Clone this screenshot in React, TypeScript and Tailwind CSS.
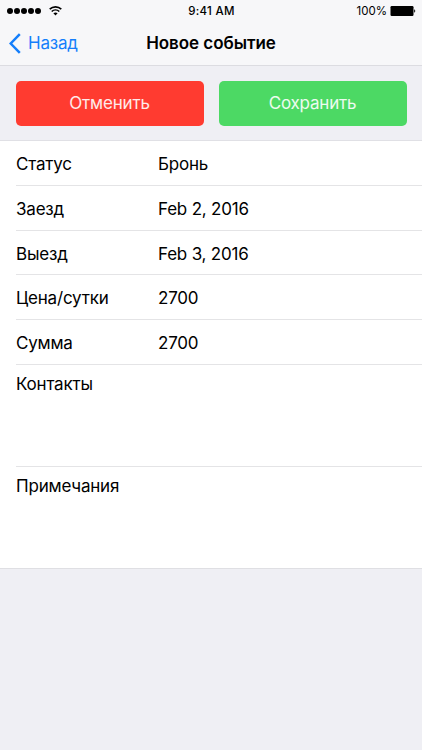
import clsx from "clsx";

const fields = [
  { label: "Статус", value: "Бронь", height: "h-[45px]" },
  { label: "Заезд", value: "Feb 2, 2016", height: "h-[45px]" },
  { label: "Выезд", value: "Feb 3, 2016", height: "h-[44px]" },
  { label: "Цена/сутки", value: "2700", height: "h-[45px]" },
  { label: "Сумма", value: "2700", height: "h-[45px]" },
];

function StatusBar() {
  return (
    <div className="grid h-[22px] grid-cols-3 items-center pl-[7px] pr-[6px] text-[11.5px] leading-none">
      <div className="flex items-center">
        <div className="flex gap-[1px]">
          {[0, 1, 2, 3, 4].map((dot) => (
            <span key={dot} className="h-[6px] w-[6px] rounded-full bg-black" />
          ))}
        </div>
        <svg className="mb-px ml-2 h-[10px] w-[13px]" viewBox="0 0 13 10" fill="none" stroke="black">
          <path d="M0.7 3.2C4 0.1 9 0.1 12.3 3.2" strokeWidth="1.6" />
          <path d="M2.7 5.5C4.9 3.5 8.1 3.5 10.3 5.5" strokeWidth="1.6" />
          <path d="M6.5 9.5L4.4 7.3C5.7 6.2 7.3 6.2 8.6 7.3Z" fill="black" stroke="none" />
        </svg>
      </div>
      <div className="pt-[2px] text-center font-medium tracking-[0.3px]">9:41 AM</div>
      <div className="flex items-center justify-end gap-[3px]">
        <span className="pt-[2px]">100%</span>
        <svg className="mb-px h-[10px] w-[26px]" viewBox="0 0 26 10">
          <rect x="0.5" y="0" width="23" height="10" rx="1.2" fill="black" />
          <path d="M24.2 3.3C25.6 3.7 25.6 6.3 24.2 6.7Z" fill="black" />
        </svg>
      </div>
    </div>
  );
}

function NavBar() {
  return (
    <div className="grid h-[43px] grid-cols-[1fr_auto_1fr] items-center px-[9px]">
      <div className="flex items-center gap-[7px] text-[17px] tracking-[-0.2px] text-[#147efb]">
        <svg className="h-[21px] w-[12px]" viewBox="0 0 12 21" fill="none">
          <path d="M10.8 1.2L1.7 10.5L10.8 19.8" stroke="#147efb" strokeWidth="2.5" />
        </svg>
        <span className="pt-px">Назад</span>
      </div>
      <h1 className="pt-px text-[17px] font-semibold tracking-[-0.05px]">Новое событие</h1>
    </div>
  );
}

export default function App() {
  return (
    <div className="flex h-[750px] w-[422px] flex-col overflow-hidden bg-[#efeff4] font-[Inter,sans-serif] text-black">
      <header className="h-[66px] border-b border-[#dcdce1] bg-[#f7f7f9]">
        <StatusBar />
        <NavBar />
      </header>

      {/* Action buttons */}
      <div className="flex h-[75px] gap-[15px] border-b border-[#e0e0e5] px-[15.5px] pt-[15px] text-[17px] tracking-[-0.2px] text-white/90">
        <button className="h-[45px] flex-1 rounded-[5px] bg-[#ff3b30]">Отменить</button>
        <button className="h-[45px] flex-1 rounded-[5px] bg-[#4cd964]">Сохранить</button>
      </div>

      {/* Event form */}
      <main className="border-b border-[#dfdfe3] bg-white pl-4 text-[17px] tracking-[-0.2px]">
        {fields.map((field) => (
          <div key={field.label} className={clsx("flex items-start border-b border-[#e4e4e6] pt-[11px]", field.height)}>
            <span className="w-[142px]">{field.label}</span>
            <span>{field.value}</span>
          </div>
        ))}
        <div className="h-[102px] border-b border-[#e4e4e6] pt-[7px]">Контакты</div>
        <div className="h-[101px] pt-[7px]">Примечания</div>
      </main>
    </div>
  );
}
